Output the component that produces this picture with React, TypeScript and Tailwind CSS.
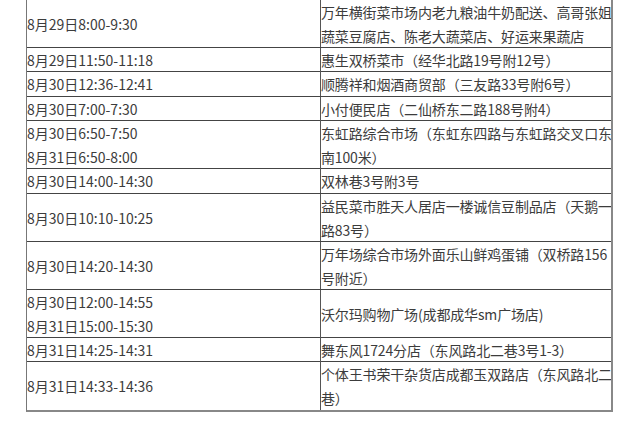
type Row = { h: string; time: string[]; place: string[] };

const rows: Row[] = [
  {
    h: 'h-[48px]',
    time: ['8月29日8:00-9:30'],
    place: ['万年横街菜市场内老九粮油牛奶配送、高哥张姐', '蔬菜豆腐店、陈老大蔬菜店、好运来果蔬店'],
  },
  { h: 'h-[24px]', time: ['8月29日11:50-11:18'], place: ['惠生双桥菜市（经华北路19号附12号）'] },
  { h: 'h-[25px]', time: ['8月30日12:36-12:41'], place: ['顺腾祥和烟酒商贸部（三友路33号附6号）'] },
  { h: 'h-[24px]', time: ['8月30日7:00-7:30'], place: ['小付便民店（二仙桥东二路188号附4）'] },
  {
    h: 'h-[48px]',
    time: ['8月30日6:50-7:50', '8月31日6:50-8:00'],
    place: ['东虹路综合市场（东虹东四路与东虹路交叉口东', '南100米）'],
  },
  { h: 'h-[25px]', time: ['8月30日14:00-14:30'], place: ['双林巷3号附3号'] },
  {
    h: 'h-[48px]',
    time: ['8月30日10:10-10:25'],
    place: ['益民菜市胜天人居店一楼诚信豆制品店（天鹅一', '路83号）'],
  },
  {
    h: 'h-[48px]',
    time: ['8月30日14:20-14:30'],
    place: ['万年场综合市场外面乐山鲜鸡蛋铺（双桥路156', '号附近）'],
  },
  {
    h: 'h-[48px]',
    time: ['8月30日12:00-14:55', '8月31日15:00-15:30'],
    place: ['沃尔玛购物广场(成都成华sm广场店)'],
  },
  { h: 'h-[24px]', time: ['8月31日14:25-14:31'], place: ['舞东风1724分店（东风路北二巷3号1-3）'] },
  {
    h: 'h-[48px]',
    time: ['8月31日14:33-14:36'],
    place: ['个体王书荣干杂货店成都玉双路店（东风路北二', '巷）'],
  },
];

export default function App() {
  return (
    <div
      className="w-[640px] h-[431px] bg-white overflow-hidden text-[14px] leading-[24px] text-[#3c3c3c]"
      style={{ fontFamily: '"Microsoft YaHei", "Noto Sans CJK SC", "Noto Sans", sans-serif' }}
    >
      <div className="ml-[26px] w-[587px] border-l border-r-2 border-b-2 border-l-[#777] border-r-[#888] border-b-[#888]">
        {rows.map((r, i) => (
          <div
            key={i}
            className={`grid grid-cols-[293px_1fr] ${r.h} ${i < rows.length - 1 ? 'border-b border-[#444]' : ''}`}
          >
            <div className="flex flex-col justify-center">
              {r.time.map((t) => (
                <div key={t} className="whitespace-nowrap">
                  {t}
                </div>
              ))}
            </div>
            <div className="flex flex-col justify-center border-l border-[#555] overflow-hidden">
              {r.place.map((p) => (
                <div key={p} className="whitespace-nowrap tracking-[-0.15px]">
                  {p}
                </div>
              ))}
            </div>
          </div>
        ))}
      </div>
    </div>
  );
}
